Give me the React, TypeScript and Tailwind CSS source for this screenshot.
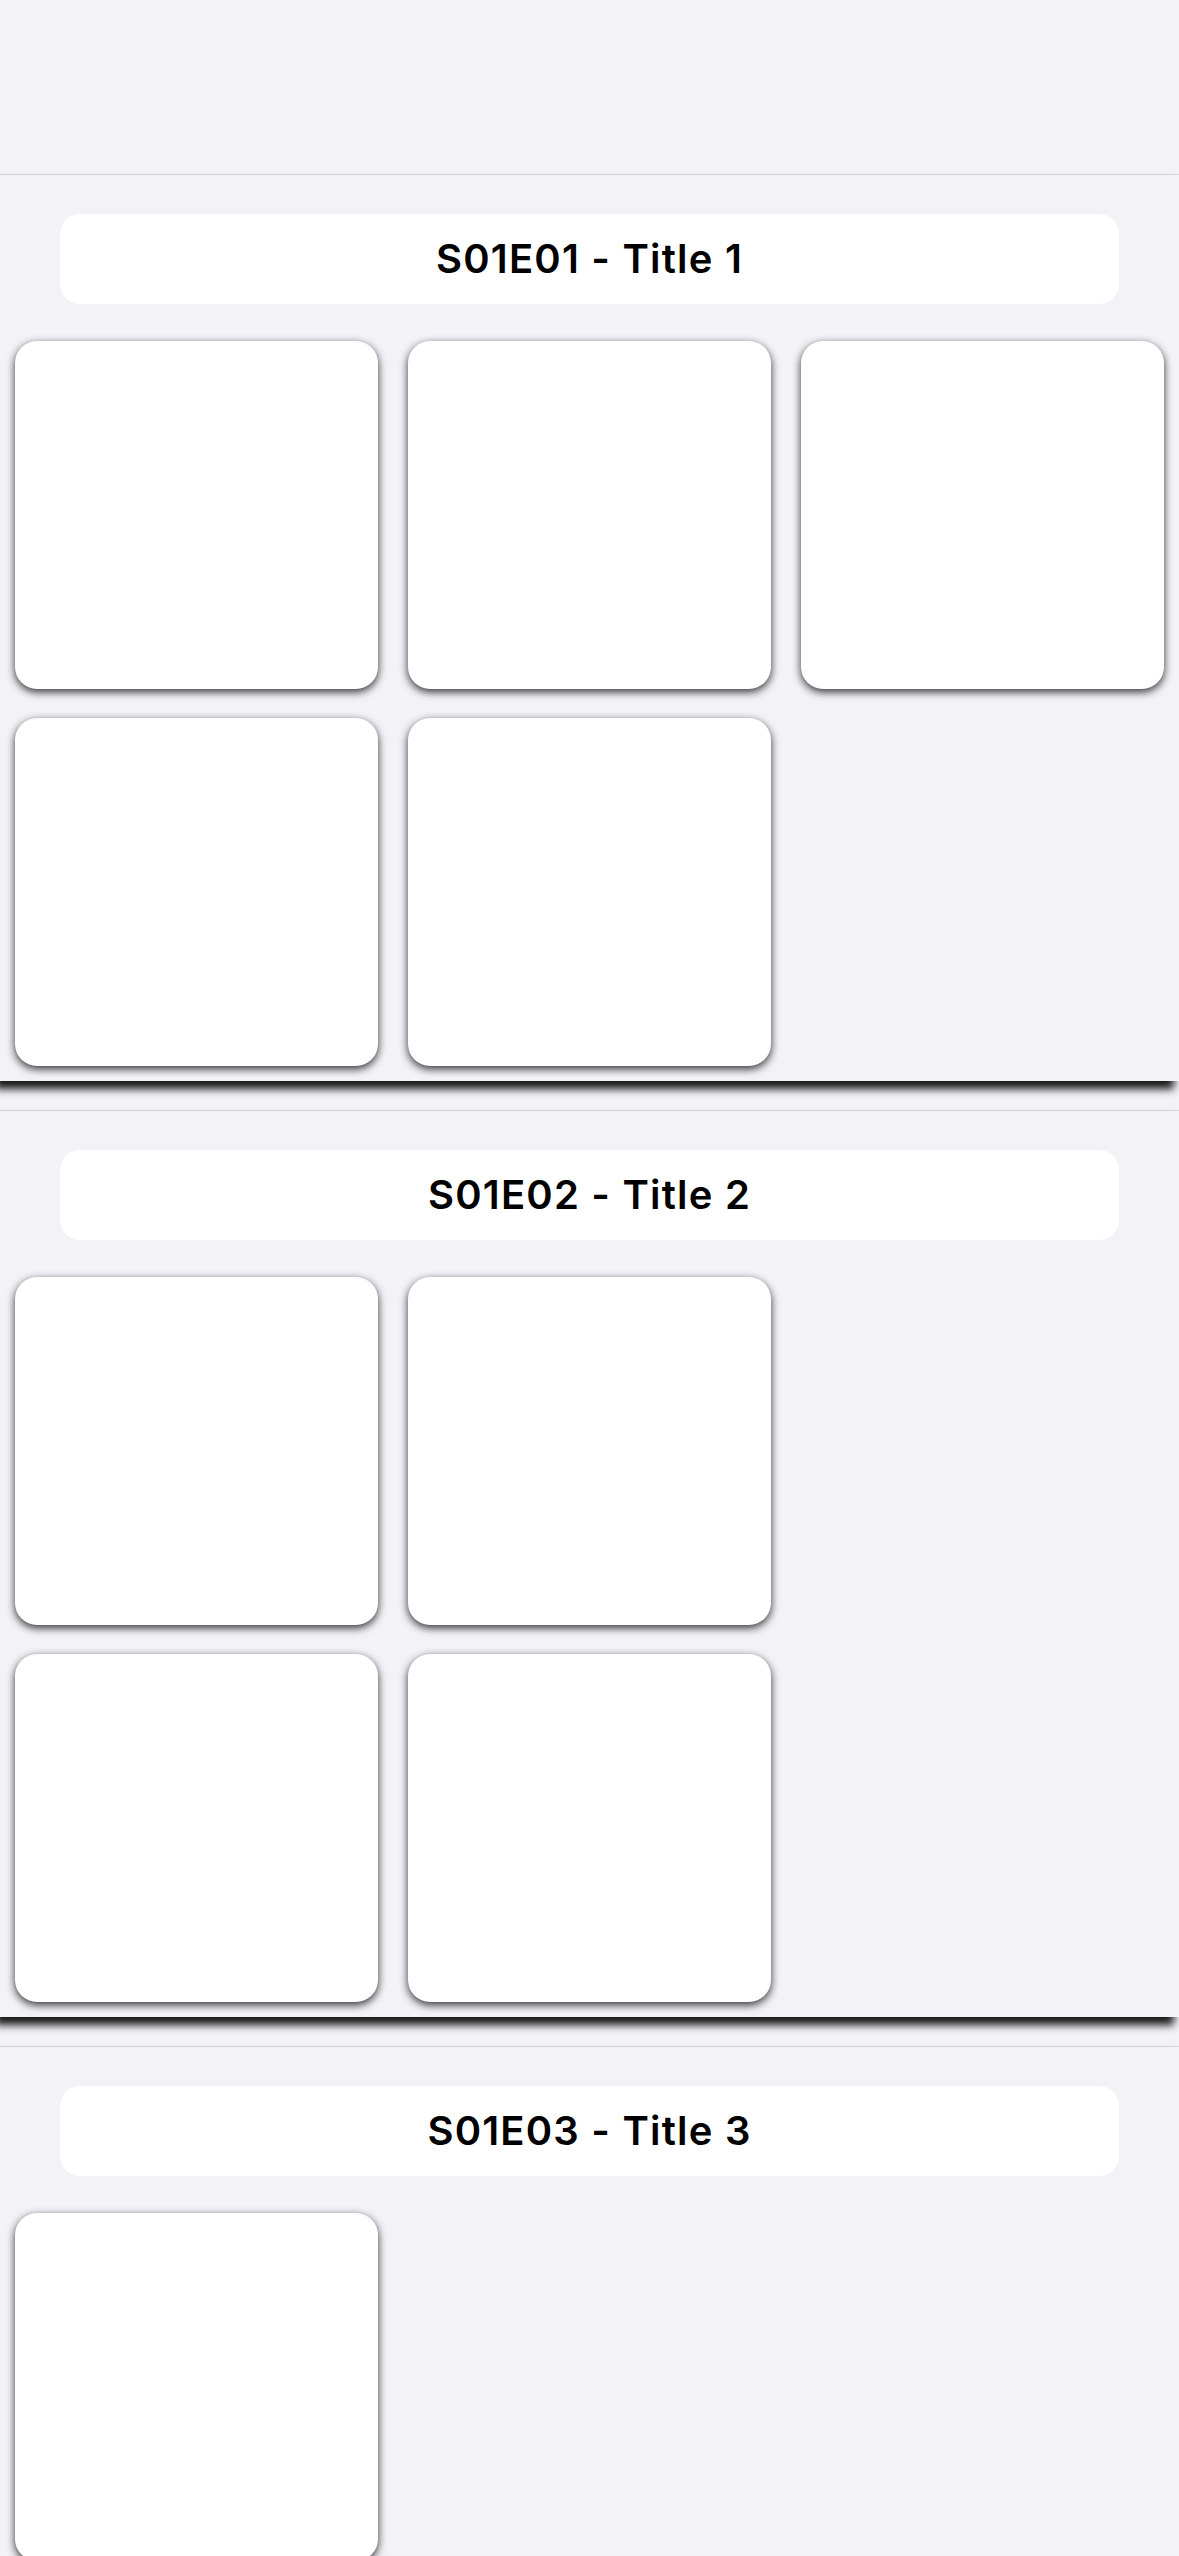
import React from 'react';

type Episode = {
  code: string;
  title: string;
  rows: number[];
};

// each row lists how many cards it holds (3 columns max)
const episodes: Episode[] = [
  { code: 'S01E01', title: 'Title 1', rows: [3, 2] },
  { code: 'S01E02', title: 'Title 2', rows: [2, 2] },
  { code: 'S01E03', title: 'Title 3', rows: [1] },
];

function EpisodeSection({ episode }: { episode: Episode }) {
  return (
    <section className="mb-[29px] border-t border-[#d4d4d8] bg-[#f2f2f7] pt-[39px] pb-[15px] shadow-[-5px_8px_8px_rgba(0,0,0,0.9)]">
      {/* Header pill */}
      <div className="mx-[60px] flex h-[90px] items-center justify-center rounded-[20px] bg-white">
        <span className="text-[40px] font-semibold tracking-[1.2px] text-black">
          {episode.code} - {episode.title}
        </span>
      </div>

      {/* Cards */}
      <div className="mt-[37px] flex flex-col gap-[29px] px-[15px]">
        {episode.rows.map((count, r) => (
          <div key={r} className="grid grid-cols-3 gap-x-[30px]">
            {Array.from({ length: count }).map((_, i) => (
              <div
                key={i}
                className="h-[348px] rounded-[22px] bg-white shadow-[0_3px_9px_rgba(0,0,0,0.8)]"
              />
            ))}
          </div>
        ))}
      </div>
    </section>
  );
}

export default function App() {
  return (
    <div
      className="min-h-screen bg-[#f2f2f7]"
      style={{ fontFamily: 'Inter, Roboto, "Noto Sans", sans-serif' }}
    >
      {/* Empty nav area */}
      <div className="h-[174px]" />

      {episodes.map((ep) => (
        <EpisodeSection key={ep.code} episode={ep} />
      ))}
    </div>
  );
}
